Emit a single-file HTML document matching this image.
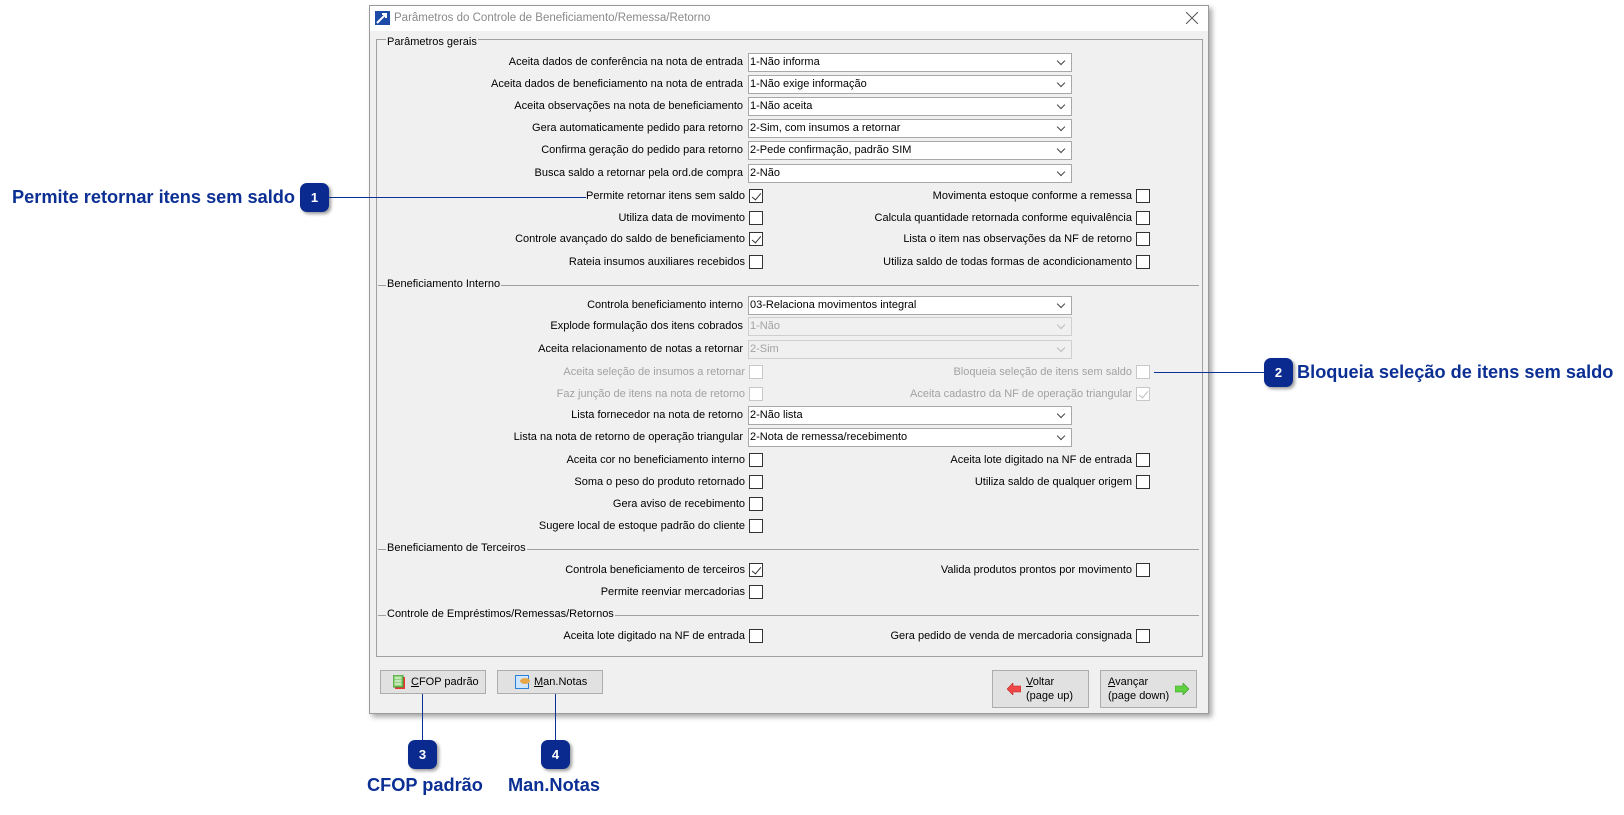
<!DOCTYPE html>
<html><head><meta charset="utf-8"><style>
*{box-sizing:border-box;margin:0;padding:0}
body{width:1624px;height:815px;background:#fff;position:relative;overflow:hidden;font-family:"Liberation Sans",sans-serif;font-size:11px;color:#000}
div,span{position:absolute}
.dlg{left:369px;top:5px;width:840px;height:709px;background:#f0f0f0;border:1px solid #9a9a9a;box-shadow:3px 3px 5px rgba(0,0,0,.35)}
.tb{left:369px;top:5px;width:840px;height:26px;background:#fff;border:1px solid #9a9a9a;border-bottom:none}
.grp{left:376px;top:39px;width:827px;height:618px;border:1px solid #a0a0a0}
.l{line-height:16px;white-space:nowrap;text-align:right}
.d{color:#a2a2a2}
.cb{width:14px;height:14px;border:1px solid #333;background:#fff}
.cb.dis{border-color:#c8c8c8}
.co{left:748px;width:324px;height:19px;background:#fff;border:1px solid #a8a8a8;line-height:16px;padding-left:1px;white-space:nowrap}
.co.dis{background:#f0f0f0;color:#a2a2a2;border-color:#cfcfcf}
.co:after{content:"";position:absolute;right:7px;top:4px;width:5px;height:5px;border-right:1.3px solid #444;border-bottom:1.3px solid #444;transform:rotate(45deg)}
.co.dis:after{border-color:#bbb}
.sec{left:378px;width:821px;height:1px;background:#a0a0a0}
.st{background:#f0f0f0;line-height:14px;padding:0 1px}
.btn{background:#e1e1e1;border:1px solid #adadad;line-height:14px}
.bd{width:29px;height:29px;border-radius:7px;background:#0b2a8f;color:#fff;font-weight:bold;font-family:"Liberation Sans",sans-serif;font-size:13px;text-align:center;line-height:29px;box-shadow:2px 2px 3px rgba(0,0,0,.4)}
.at{color:#0c2f94;font-weight:bold;font-family:"Liberation Sans",sans-serif;font-size:18.2px;white-space:nowrap}
.ln{background:#0c2f94}
.ck:after{content:"";position:absolute;left:4px;top:1px;width:4px;height:8px;border-right:1.3px solid #333;border-bottom:1.3px solid #333;transform:rotate(40deg)}
.ck.dis:after{border-color:#bbb}
</style></head><body>
<div class="dlg"></div>
<div class="tb"></div>
<svg style="position:absolute;left:375px;top:11px" width="15" height="14"><rect width="15" height="14" fill="#1e4aa8"/><path d="M2 12 L11 3 M7 3 H11 V7" stroke="#fff" stroke-width="2" fill="none"/></svg>
<span style="left:394px;top:10px;color:#8a8a8a;font-size:11.5px;line-height:16px">Parâmetros do Controle de Beneficiamento/Remessa/Retorno</span>
<svg style="position:absolute;left:1186px;top:12px" width="12" height="12"><path d="M0 0 L12 12 M12 0 L0 12" stroke="#555" stroke-width="1"/></svg>
<div class="grp"></div>
<span class="st" style="left:386px;top:35px">Parâmetros gerais</span>

<span class="l" style="right:881px;top:54px">Aceita dados de conferência na nota de entrada</span><div class="co" style="top:53px">1-Não informa</div>
<span class="l" style="right:881px;top:76px">Aceita dados de beneficiamento na nota de entrada</span><div class="co" style="top:75px">1-Não exige informação</div>
<span class="l" style="right:881px;top:98px">Aceita observações na nota de beneficiamento</span><div class="co" style="top:97px">1-Não aceita</div>
<span class="l" style="right:881px;top:120px">Gera automaticamente pedido para retorno</span><div class="co" style="top:119px">2-Sim, com insumos a retornar</div>
<span class="l" style="right:881px;top:142px">Confirma geração do pedido para retorno</span><div class="co" style="top:141px">2-Pede confirmação, padrão SIM</div>
<span class="l" style="right:881px;top:165px">Busca saldo a retornar pela ord.de compra</span><div class="co" style="top:164px">2-Não</div>

<span class="l" style="right:879px;top:188px">Permite retornar itens sem saldo</span><div class="cb ck" style="left:749px;top:189px"></div>
<span class="l" style="right:492px;top:188px">Movimenta estoque conforme a remessa</span><div class="cb" style="left:1136px;top:189px"></div>
<span class="l" style="right:879px;top:210px">Utiliza data de movimento</span><div class="cb" style="left:749px;top:211px"></div>
<span class="l" style="right:492px;top:210px">Calcula quantidade retornada conforme equivalência</span><div class="cb" style="left:1136px;top:211px"></div>
<span class="l" style="right:879px;top:231px">Controle avançado do saldo de beneficiamento</span><div class="cb ck" style="left:749px;top:232px"></div>
<span class="l" style="right:492px;top:231px">Lista o item nas observações da NF de retorno</span><div class="cb" style="left:1136px;top:232px"></div>
<span class="l" style="right:879px;top:254px">Rateia insumos auxiliares recebidos</span><div class="cb" style="left:749px;top:255px"></div>
<span class="l" style="right:492px;top:254px">Utiliza saldo de todas formas de acondicionamento</span><div class="cb" style="left:1136px;top:255px"></div>

<div class="sec" style="top:285px"></div><span class="st" style="left:386px;top:277px">Beneficiamento Interno</span>
<span class="l" style="right:881px;top:297px">Controla beneficiamento interno</span><div class="co" style="top:296px">03-Relaciona movimentos integral</div>
<span class="l" style="right:881px;top:318px">Explode formulação dos itens cobrados</span><div class="co dis" style="top:317px">1-Não</div>
<span class="l" style="right:881px;top:341px">Aceita relacionamento de notas a retornar</span><div class="co dis" style="top:340px">2-Sim</div>
<span class="l d" style="right:879px;top:364px">Aceita seleção de insumos a retornar</span><div class="cb dis" style="left:749px;top:365px"></div>
<span class="l d" style="right:492px;top:364px">Bloqueia seleção de itens sem saldo</span><div class="cb dis" style="left:1136px;top:365px"></div>
<span class="l d" style="right:879px;top:386px">Faz junção de itens na nota de retorno</span><div class="cb dis" style="left:749px;top:387px"></div>
<span class="l d" style="right:492px;top:386px">Aceita cadastro da NF de operação triangular</span><div class="cb dis ck" style="left:1136px;top:387px"></div>
<span class="l" style="right:881px;top:407px">Lista fornecedor na nota de retorno</span><div class="co" style="top:406px">2-Não lista</div>
<span class="l" style="right:881px;top:429px">Lista na nota de retorno de operação triangular</span><div class="co" style="top:428px">2-Nota de remessa/recebimento</div>
<span class="l" style="right:879px;top:452px">Aceita cor no beneficiamento interno</span><div class="cb" style="left:749px;top:453px"></div>
<span class="l" style="right:492px;top:452px">Aceita lote digitado na NF de entrada</span><div class="cb" style="left:1136px;top:453px"></div>
<span class="l" style="right:879px;top:474px">Soma o peso do produto retornado</span><div class="cb" style="left:749px;top:475px"></div>
<span class="l" style="right:492px;top:474px">Utiliza saldo de qualquer origem</span><div class="cb" style="left:1136px;top:475px"></div>
<span class="l" style="right:879px;top:496px">Gera aviso de recebimento</span><div class="cb" style="left:749px;top:497px"></div>
<span class="l" style="right:879px;top:518px">Sugere local de estoque padrão do cliente</span><div class="cb" style="left:749px;top:519px"></div>

<div class="sec" style="top:549px"></div><span class="st" style="left:386px;top:541px">Beneficiamento de Terceiros</span>
<span class="l" style="right:879px;top:562px">Controla beneficiamento de terceiros</span><div class="cb ck" style="left:749px;top:563px"></div>
<span class="l" style="right:492px;top:562px">Valida produtos prontos por movimento</span><div class="cb" style="left:1136px;top:563px"></div>
<span class="l" style="right:879px;top:584px">Permite reenviar mercadorias</span><div class="cb" style="left:749px;top:585px"></div>

<div class="sec" style="top:615px"></div><span class="st" style="left:386px;top:607px">Controle de Empréstimos/Remessas/Retornos</span>
<span class="l" style="right:879px;top:628px">Aceita lote digitado na NF de entrada</span><div class="cb" style="left:749px;top:629px"></div>
<span class="l" style="right:492px;top:628px">Gera pedido de venda de mercadoria consignada</span><div class="cb" style="left:1136px;top:629px"></div>

<div class="btn" style="left:380px;top:670px;width:106px;height:24px"><svg style="position:absolute;left:12px;top:4px" width="12" height="14"><rect x="2" y="2" width="10" height="12" fill="#e33"/><rect x="0" y="0" width="10" height="12" fill="#8ed27a" stroke="#3a9a30"/><path d="M2 3h6M2 6h6M2 9h6" stroke="#fff"/></svg><span style="left:30px;top:4px"><u>C</u>FOP padrão</span></div>
<div class="btn" style="left:497px;top:670px;width:106px;height:24px"><svg style="position:absolute;left:17px;top:4px" width="16" height="14"><rect x="0.5" y="0.5" width="13" height="13" fill="#cfe6ff" stroke="#2a7fd6"/><ellipse cx="10" cy="6" rx="5" ry="3" fill="#e8a84a"/></svg><span style="left:36px;top:4px"><u>M</u>an.Notas</span></div>
<div class="btn" style="left:992px;top:670px;width:97px;height:38px"><svg style="position:absolute;left:14px;top:12px" width="14" height="12"><path d="M0 6 L6 0 V3 H14 V9 H6 V12 Z" fill="#f04848" stroke="#c02020" stroke-width=".6"/></svg><span style="left:33px;top:4px"><u>V</u>oltar<br>(page up)</span></div>
<div class="btn" style="left:1100px;top:670px;width:97px;height:38px"><span style="left:7px;top:4px"><u>A</u>vançar<br>(page down)</span><svg style="position:absolute;left:74px;top:12px" width="14" height="12"><path d="M14 6 L8 0 V3 H0 V9 H8 V12 Z" fill="#5fd040" stroke="#2f9a20" stroke-width=".6"/></svg></div>

<span class="at" style="left:12px;top:187px">Permite retornar itens sem saldo</span>
<div class="bd" style="left:300px;top:183px">1</div>
<div class="ln" style="left:329px;top:197px;width:257px;height:1px"></div>
<div class="ln" style="left:1154px;top:372px;width:110px;height:1px"></div>
<div class="bd" style="left:1264px;top:358px">2</div>
<span class="at" style="left:1297px;top:362px">Bloqueia seleção de itens sem saldo</span>
<div class="ln" style="left:422px;top:694px;width:1px;height:47px"></div>
<div class="bd" style="left:408px;top:740px">3</div>
<span class="at" style="left:367px;top:775px">CFOP padrão</span>
<div class="ln" style="left:555px;top:694px;width:1px;height:47px"></div>
<div class="bd" style="left:541px;top:740px">4</div>
<span class="at" style="left:508px;top:775px">Man.Notas</span>
</body></html>
